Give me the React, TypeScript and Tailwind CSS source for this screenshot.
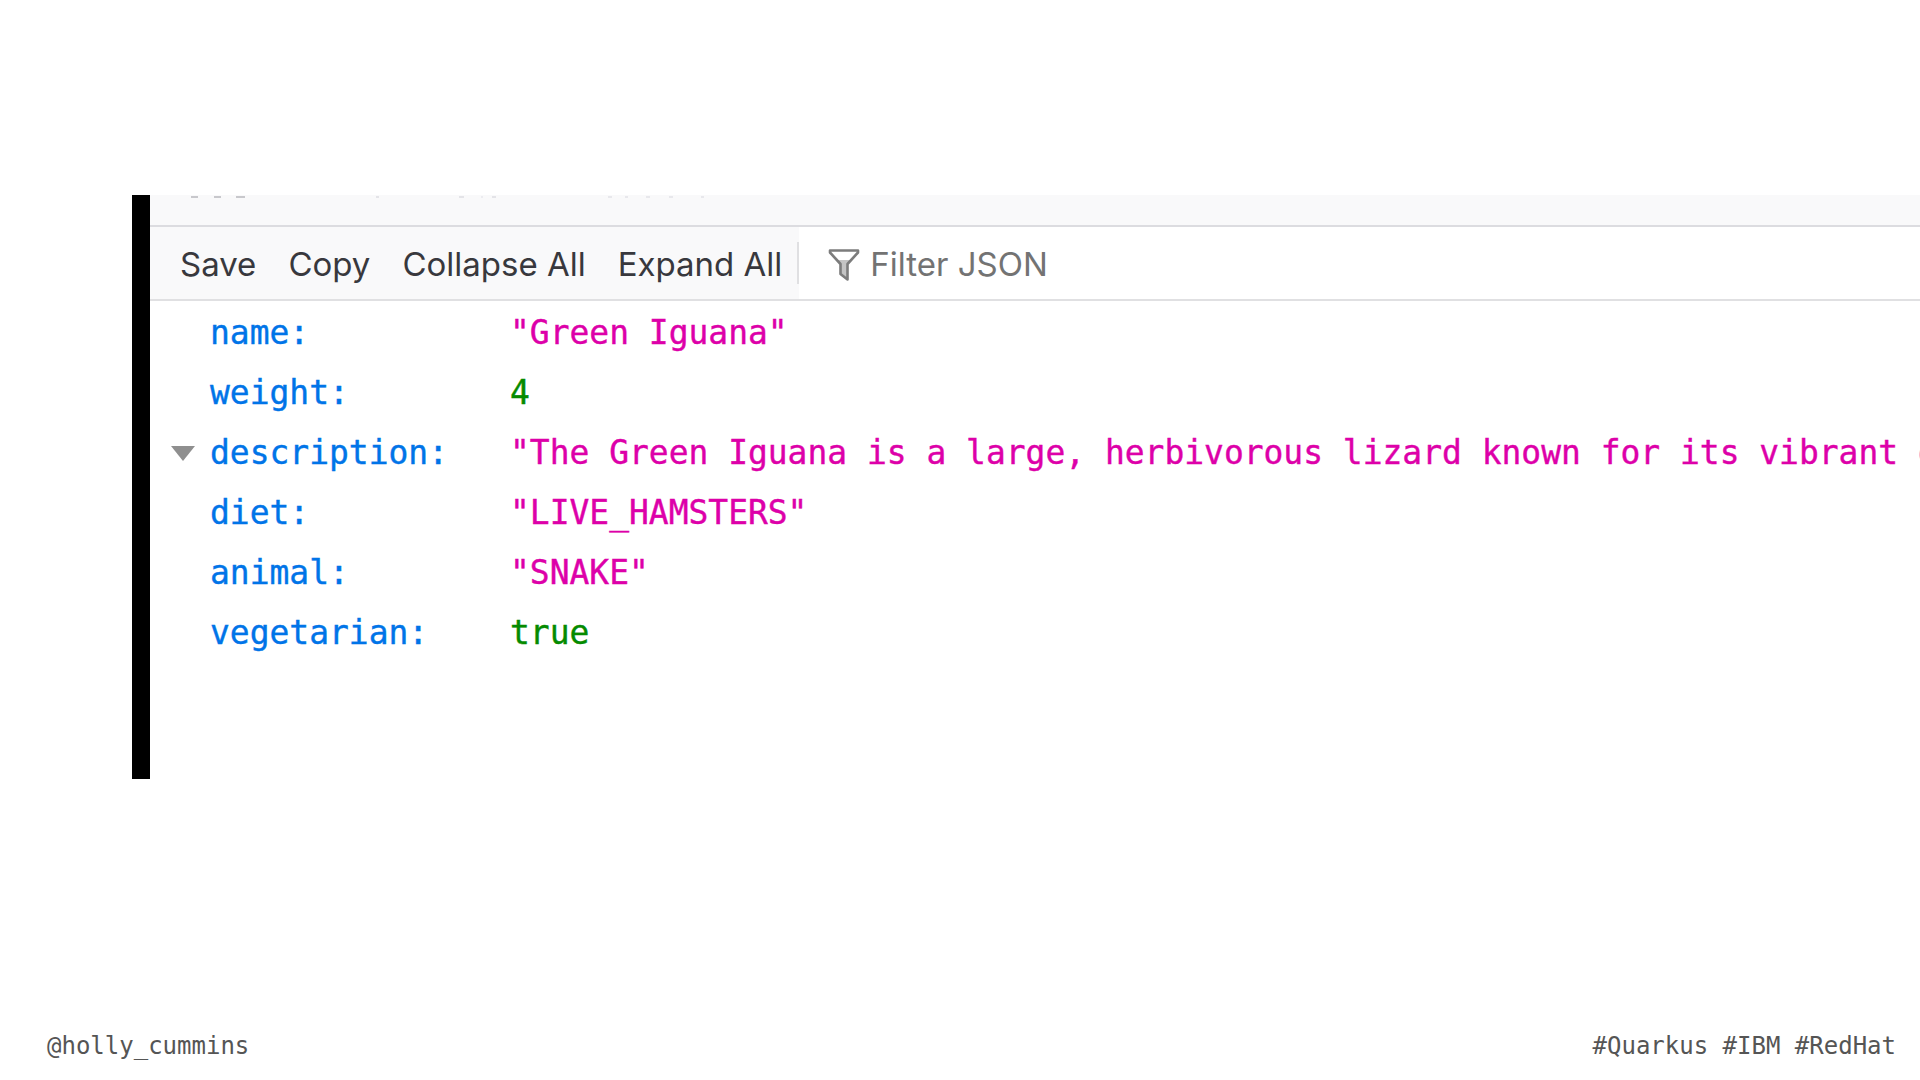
const rows = [
  { key: 'name:', value: '"Green Iguana"', color: 'text-[#dd00a9]' },
  { key: 'weight:', value: '4', color: 'text-[#058b00]' },
  { key: 'description:', value: '"The Green Iguana is a large, herbivorous lizard known for its vibrant green color', color: 'text-[#dd00a9]', open: true },
  { key: 'diet:', value: '"LIVE_HAMSTERS"', color: 'text-[#dd00a9]' },
  { key: 'animal:', value: '"SNAKE"', color: 'text-[#dd00a9]' },
  { key: 'vegetarian:', value: 'true', color: 'text-[#058b00]' },
];

const FilterIcon = () => (
  <svg width="32" height="34" viewBox="0 0 32 34" className="shrink-0">
    <path d="M9 12h14l-4 5v13l-6-4v-9z" fill="#c4c4c4" />
    <path d="M2 2.5h28v2L19.5 16v15.5L12.5 26V16L2 4.5z" fill="none" stroke="#7c7c7c" strokeWidth="2.6" strokeLinejoin="round" />
  </svg>
);

const toolbarButtons = ['Save', 'Copy', 'Collapse All', 'Expand All'];

// bottoms of the cropped tab bar showing at the top edge
const TabBarRemnants = () => (
  <>
    <span className="absolute top-px left-[41px] w-[7px] h-[2px] bg-[#c8c8cc]" />
    <span className="absolute top-px left-[64px] w-[7px] h-[2px] bg-[#c8c8cc]" />
    <span className="absolute top-px left-[86px] w-[9px] h-[2px] bg-[#c8c8cc]" />
    <span className="absolute top-px left-[226px] w-[3px] h-[2px] bg-[#e4e4e8]" />
    <span className="absolute top-px left-[309px] w-[5px] h-[2px] bg-[#e4e4e8]" />
    <span className="absolute top-px left-[331px] w-[2px] h-[2px] bg-[#ececf0]" />
    <span className="absolute top-px left-[342px] w-[4px] h-[2px] bg-[#e4e4e8]" />
    <span className="absolute top-px left-[458px] w-[4px] h-[2px] bg-[#e8e8ec]" />
    <span className="absolute top-px left-[475px] w-[3px] h-[2px] bg-[#e8e8ec]" />
    <span className="absolute top-px left-[496px] w-[4px] h-[2px] bg-[#e8e8ec]" />
    <span className="absolute top-px left-[519px] w-[4px] h-[2px] bg-[#e8e8ec]" />
    <span className="absolute top-px left-[551px] w-[3px] h-[2px] bg-[#e8e8ec]" />
  </>
);

export default function App() {
  return (
    <div className="w-[1920px] h-[1080px] bg-white flex flex-col overflow-hidden">
      <div className="h-[195px] shrink-0" />
      <div className="h-[584px] shrink-0 ml-[132px] border-l-[18px] border-black flex flex-col">
        <div className="h-[32px] shrink-0 relative bg-[#f9f9fa] border-b-2 border-[#dcdce0]">
          <TabBarRemnants />
        </div>
        <div className="h-[74px] shrink-0 bg-[#f9f9fa] border-b-2 border-[#e0e0e2] flex items-center font-['Inter',sans-serif] text-[33px] text-[#38383d]">
          <div className="flex items-center gap-[32px] pl-[30px] pr-[15px] pt-[4px]">
            {toolbarButtons.map((label) => (
              <span key={label}>{label}</span>
            ))}
          </div>
          <div className="w-[2px] h-[42px] bg-[#e0e0e2]" />
          <div className="flex-1 self-stretch bg-white flex items-center gap-[10px] pl-[29px] pt-[4px] text-[#737373]">
            <FilterIcon />
            <span>Filter JSON</span>
          </div>
        </div>
        <div className="font-['DejaVu_Sans_Mono',monospace] text-[32.95px] pt-[2px] [-webkit-text-stroke:0.4px_currentColor]">
          {rows.map((row) => (
            <div key={row.key} className="h-[60px] flex items-center whitespace-nowrap relative">
              {row.open && (
                <span className="absolute left-[21px] top-[23px] w-0 h-0 border-l-[12px] border-r-[12px] border-t-[15px] border-l-transparent border-r-transparent border-t-[#8f8f8f]" />
              )}
              <span className="w-[360px] pl-[60px] shrink-0 text-[#0074e8]">{row.key}</span>
              <span className={row.color}>{row.value}</span>
            </div>
          ))}
        </div>
      </div>
      <div className="mt-auto h-[52px] pl-[47px] pr-[24px] flex items-start justify-between font-['DejaVu_Sans_Mono',monospace] text-[24px] text-[#555555]">
        <span>@holly_cummins</span>
        <span>#Quarkus #IBM #RedHat</span>
      </div>
    </div>
  );
}
